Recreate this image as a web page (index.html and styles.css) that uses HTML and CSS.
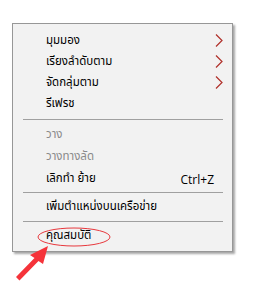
FILE: index.html
```html
<!DOCTYPE html>
<html lang="th">
<head>
<meta charset="utf-8">
<link rel="stylesheet" href="styles.css">
</head>
<body>
<div class="menu">
  <div class="item short"><span class="label">มุมมอง</span><span class="chev"><svg width="8" height="13" viewBox="0 0 8 13"><path d="M1 0.5 L7 6.5 L1 12.5" fill="none" stroke="#b0302a" stroke-width="1.2"/></svg></span></div>
  <div class="item short"><span class="label">เรียงลำดับตาม</span><span class="chev"><svg width="8" height="13" viewBox="0 0 8 13"><path d="M1 0.5 L7 6.5 L1 12.5" fill="none" stroke="#b0302a" stroke-width="1.2"/></svg></span></div>
  <div class="item short"><span class="label">จัดกลุ่มตาม</span><span class="chev"><svg width="8" height="13" viewBox="0 0 8 13"><path d="M1 0.5 L7 6.5 L1 12.5" fill="none" stroke="#b0302a" stroke-width="1.2"/></svg></span></div>
  <div class="item short"><span class="label">รีเฟรช</span></div>
  <div class="sep sep1"></div>
  <div class="item disabled"><span class="label">วาง</span></div>
  <div class="item disabled"><span class="label">วางทางลัด</span></div>
  <div class="item"><span class="label">เลิกทำ ย้าย</span><span class="shortcut">Ctrl+Z</span></div>
  <div class="sep sep2"></div>
  <div class="item"><span class="label">เพิ่มตำแหน่งบนเครือข่าย</span></div>
  <div class="sep sep3"></div>
  <div class="item"><span class="label">คุณสมบัติ</span></div>
</div>
<svg class="annot" width="259" height="288" viewBox="0 0 259 288">
  <ellipse cx="74" cy="237" rx="36" ry="9" fill="none" stroke="#e8383d" stroke-width="1"/>
  <path d="M48 246 L43 264 L38.5 261 L19.5 280.5 L16 277 L34.5 258 L30 255 Z" fill="#f5333a"/>
</svg>
</body>
</html>
```
FILE: styles.css
```css
html, body {
  margin: 0;
  padding: 0;
  background: #ffffff;
}
body {
  position: relative;
  width: 259px;
  height: 288px;
  overflow: hidden;
  padding-top: 23px;
  padding-left: 12px;
  box-sizing: border-box;
  font-family: "Noto Sans Thai", "Leelawadee UI", Tahoma, "Noto Sans", "DejaVu Sans", sans-serif;
  font-size: 11.5px;
  color: #000;
}
.menu {
  width: 221px;
  box-sizing: border-box;
  background: #f2f2f2;
  border: 1px solid #979797;
  padding: 6px 0 4px 0;
  box-shadow: 2px 2px 2px rgba(0, 0, 0, 0.35);
}
.item {
  height: 22px;
  display: flex;
  align-items: center;
  justify-content: space-between;
  padding: 0 9px 0 33px;
  white-space: nowrap;
}
.item.short {
  height: 21px;
}
.label {
  line-height: 1;
}
.disabled {
  color: #8a8a8a;
}
.chev {
  display: flex;
  width: 8px;
}
.shortcut {
  margin-right: 9px;
  font-family: "Open Sans", "Noto Sans", sans-serif;
  font-size: 12px;
}
.sep {
  margin: 0 9px 0 10px;
  border-top: 1px solid #a0a0a0;
}
.sep1 { margin-top: 5px; margin-bottom: 4px; }
.sep2 { margin-top: 2px; margin-bottom: 3px; }
.sep3 { margin-top: 3px; margin-bottom: 3px; }
.annot {
  position: absolute;
  left: 0;
  top: 0;
  pointer-events: none;
}
```
